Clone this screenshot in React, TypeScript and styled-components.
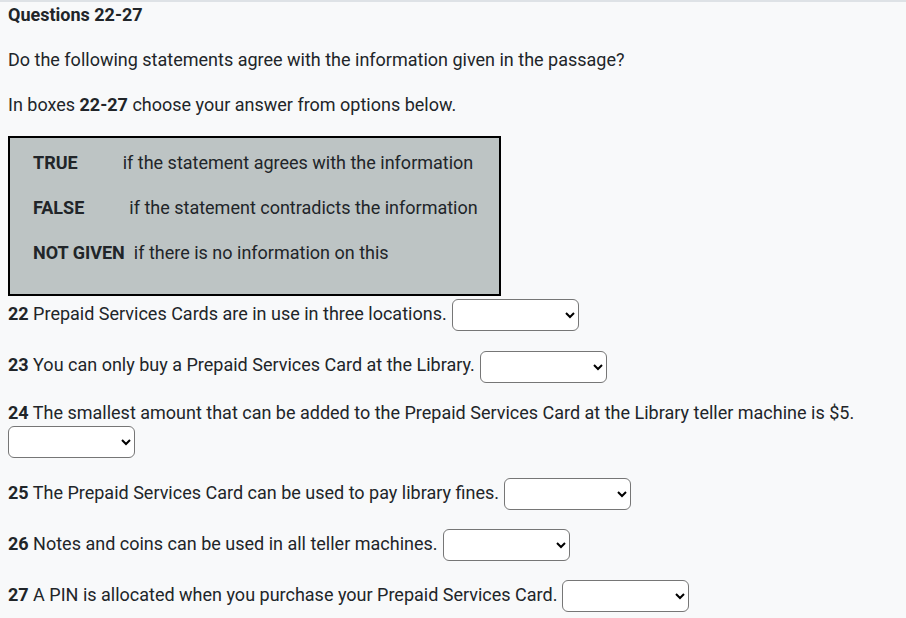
import React from "react";
import styled, { createGlobalStyle } from "styled-components";

const Global = createGlobalStyle`
  html, body { margin: 0; padding: 0; background: #f8f9fa; }
  body { font-family: Roboto, "Liberation Sans", Arial, sans-serif; color: #212529; }
`;

const Page = styled.div`
  border-top: 2px solid #dee2e6;
  padding: 0 8px;
  font-size: 18px;
  line-height: 27px;
  min-height: 616px;
`;

const Title = styled.h3`
  margin: -1px 0 18px;
  font-size: 18px;
  font-weight: 700;
  line-height: 27px;
`;

const Para = styled.p`
  margin: 0 0 18px;
`;

const Legend = styled.div`
  box-sizing: border-box;
  width: 493px;
  border: 2px solid #000;
  background: #bdc4c4;
  padding: 11px 0 10px 23px;
  margin-bottom: 2px;
`;

const LegendRow = styled.div`
  line-height: 27px;
  margin-bottom: 18px;
`;

const Key = styled.b<{ $gap: number }>`
  display: inline-block;
  font-weight: 700;
  margin-right: ${(p) => p.$gap}px;
`;

const Question = styled.p`
  margin: 0 0 18px;
  line-height: 31px;
`;

const Num = styled.b`
  font-weight: 700;
`;

const Select = styled.select`
  width: 127px;
  height: 32px;
  margin-left: 5px;
  vertical-align: middle;
  border: 1px solid #767676;
  border-radius: 6px;
  background: #fff;
  font-size: 16px;
  font-family: inherit;
`;

const Wrapped = styled.p`
  margin: -2px 0 18px;
  line-height: 27px;
`;

const SelectLine = styled.div`
  height: 33px;
  display: flex;
  align-items: flex-start;
  & > select { margin-left: 0; }
`;

const Options = () => (
  <>
    <option value=""></option>
    <option value="TRUE">TRUE</option>
    <option value="FALSE">FALSE</option>
    <option value="NOT GIVEN">NOT GIVEN</option>
  </>
);

export default function App() {
  return (
    <Page>
      <Global />
      <Title>Questions 22-27</Title>
      <Para>Do the following statements agree with the information given in the passage?</Para>
      <Para>
        In boxes <b>22-27</b> choose your answer from options below.
      </Para>
      <Legend>
        <LegendRow>
          <Key $gap={45}>TRUE</Key>if the statement agrees with the information
        </LegendRow>
        <LegendRow>
          <Key $gap={45}>FALSE</Key>if the statement contradicts the information
        </LegendRow>
        <LegendRow>
          <Key $gap={9}>NOT GIVEN</Key>if there is no information on this
        </LegendRow>
      </Legend>
      <Question>
        <Num>22</Num> Prepaid Services Cards are in use in three locations.
        <Select defaultValue="">
          <Options />
        </Select>
      </Question>
      <Question>
        <Num>23</Num> You can only buy a Prepaid Services Card at the Library.
        <Select defaultValue="">
          <Options />
        </Select>
      </Question>
      <Wrapped>
        <Num>24</Num> The smallest amount that can be added to the Prepaid Services Card at the Library teller machine is $5.
        <SelectLine>
          <Select defaultValue="">
            <Options />
          </Select>
        </SelectLine>
      </Wrapped>
      <Question>
        <Num>25</Num> The Prepaid Services Card can be used to pay library fines.
        <Select defaultValue="">
          <Options />
        </Select>
      </Question>
      <Question>
        <Num>26</Num> Notes and coins can be used in all teller machines.
        <Select defaultValue="">
          <Options />
        </Select>
      </Question>
      <Question>
        <Num>27</Num> A PIN is allocated when you purchase your Prepaid Services Card.
        <Select defaultValue="">
          <Options />
        </Select>
      </Question>
    </Page>
  );
}
